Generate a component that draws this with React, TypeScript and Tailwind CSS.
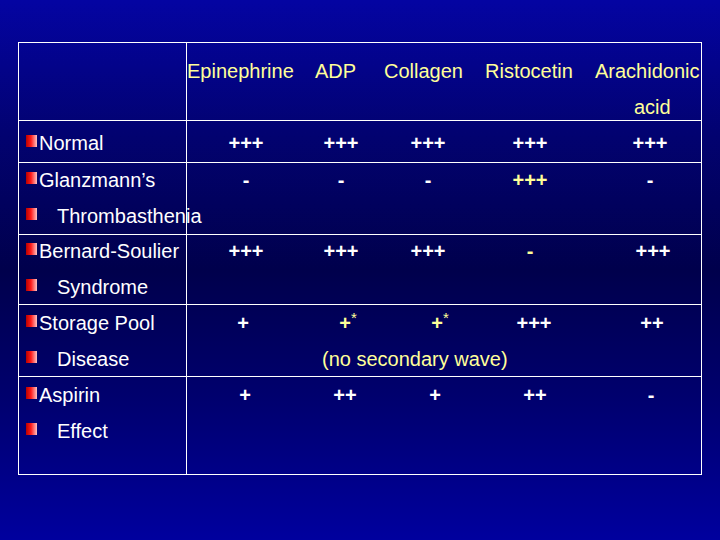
import type { ReactNode } from "react";

type Val = { t: ReactNode; yellow?: boolean; pad?: string };

const COLS = "grid grid-cols-[118px_72px_102px_102px_1fr] content-start";

function Bullet() {
	return (
		<span
			aria-hidden="true"
			className="mt-[10px] h-[12px] w-[11px] shrink-0 bg-[linear-gradient(to_right,#b80000,#ff1a1a_45%,#ffc4c4)]"
		/>
	);
}

function Label({ lines }: { lines: string[] }) {
	return (
		<div className="flex flex-col">
			{lines.map((line, i) => (
				<div key={line} className="flex items-start whitespace-nowrap">
					<Bullet />
					<span className={i === 0 ? "ml-[2px]" : "ml-[20px]"}>{line}</span>
				</div>
			))}
		</div>
	);
}

function Values({ vals, extra }: { vals: Val[]; extra?: ReactNode }) {
	return (
		<div className={COLS}>
			{vals.map((v, i) => (
				<div
					key={i}
					className={`text-center font-bold whitespace-nowrap ${i === 4 ? "pl-[18px]" : ""} ${v.pad ?? ""} ${
						v.yellow ? "text-[#ffff99]" : "text-white"
					}`}>
					{v.t}
				</div>
			))}
			{extra}
		</div>
	);
}

function Row({
	h,
	shift,
	lines,
	vals,
	extra,
	last,
}: {
	h: string;
	shift: string;
	lines: string[];
	vals: Val[];
	extra?: ReactNode;
	last?: boolean;
}) {
	return (
		<div className={`grid grid-cols-[168px_1fr] ${h} ${last ? "" : "border-b border-white"}`}>
			<div className="border-r border-white pl-[7px]">
				<div className={shift}>
					<Label lines={lines} />
				</div>
			</div>
			<div className={shift}>
				<Values vals={vals} extra={extra} />
			</div>
		</div>
	);
}

const star = (
	<>
		+<sup className="text-[15px] font-normal">*</sup>
	</>
);

export default function App() {
	return (
		<div className="h-[540px] w-[720px] overflow-hidden bg-[linear-gradient(to_bottom,#0404a2,#020270_25%,#00004c_50%,#000070_75%,#00009e)] pl-[18px] pt-[42px] font-['Liberation_Sans',Arial,sans-serif] text-[20px] leading-[36px] text-white">
			<div className="flex h-[433px] w-[684px] flex-col border border-white">
				{/* header */}
				<div className="grid h-[78px] grid-cols-[168px_1fr] border-b border-white">
					<div className="border-r border-white" />
					<div className={`${COLS} pt-[10px] text-[#ffff99] whitespace-nowrap`}>
						<div>Epinephrine</div>
						<div className="pl-[10px]">ADP</div>
						<div className="pl-[7px]">Collagen</div>
						<div className="pl-[6px]">Ristocetin</div>
						<div className="flex flex-col pl-[14px]">
							<span>Arachidonic</span>
							<span className="pl-[39px]">acid</span>
						</div>
					</div>
				</div>

				<Row
					h="h-[42px]"
					shift="pt-[4px]"
					lines={["Normal"]}
					vals={[{ t: "+++" }, { t: "+++" }, { t: "+++" }, { t: "+++" }, { t: "+++" }]}
				/>
				<Row
					h="h-[72px]"
					shift="-mt-[1px]"
					lines={["Glanzmann’s", "Thrombasthenia"]}
					vals={[{ t: "-" }, { t: "-" }, { t: "-" }, { t: "+++", yellow: true }, { t: "-" }]}
				/>
				<Row
					h="h-[70px]"
					shift="-mt-[2px]"
					lines={["Bernard-Soulier", "Syndrome"]}
					vals={[
						{ t: "+++" },
						{ t: "+++" },
						{ t: "+++" },
						{ t: "-", yellow: true },
						{ t: "+++", pad: "pl-[24px]" },
					]}
				/>
				<Row
					h="h-[72px]"
					lines={["Storage Pool", "Disease"]}
					shift=""
					vals={[
						{ t: "+", pad: "pr-[6px]" },
						{ t: star, yellow: true, pad: "pl-[14px]" },
						{ t: star, yellow: true, pad: "pl-[24px]" },
						{ t: "+++", pad: "pl-[8px]" },
						{ t: "++", pad: "pl-[22px]" },
					]}
					extra={
						<div className="col-span-3 col-start-2 whitespace-nowrap pl-[17px] text-[#ffff99]">
							(no secondary wave)
						</div>
					}
				/>
				<Row
					h="flex-1"
					lines={["Aspirin", "Effect"]}
					shift=""
					last
					vals={[
						{ t: "+", pad: "pr-[2px]" },
						{ t: "++", pad: "pl-[8px]" },
						{ t: "+", pad: "pl-[14px]" },
						{ t: "++", pad: "pl-[10px]" },
						{ t: "-", pad: "pl-[20px]" },
					]}
				/>
			</div>
		</div>
	);
}
